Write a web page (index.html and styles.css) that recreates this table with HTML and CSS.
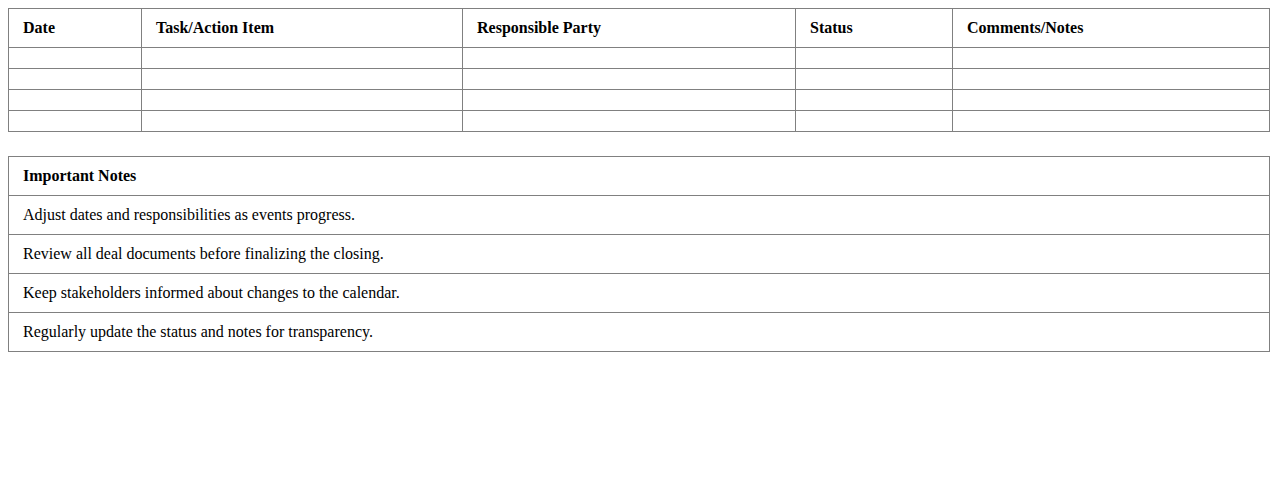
FILE: index.html
```html
<!DOCTYPE html>
<html>
<head>
<meta charset="utf-8">
<link rel="stylesheet" href="styles.css">
</head>
<body>
<table class="grid schedule">
  <colgroup>
    <col class="c-date"><col class="c-task"><col class="c-party"><col class="c-status"><col class="c-notes">
  </colgroup>
  <thead>
    <tr><th>Date</th><th>Task/Action Item</th><th>Responsible Party</th><th>Status</th><th>Comments/Notes</th></tr>
  </thead>
  <tbody>
    <tr><td></td><td></td><td></td><td></td><td></td></tr>
    <tr><td></td><td></td><td></td><td></td><td></td></tr>
    <tr><td></td><td></td><td></td><td></td><td></td></tr>
    <tr><td></td><td></td><td></td><td></td><td></td></tr>
  </tbody>
</table>
<table class="grid notes">
  <thead><tr><th>Important Notes</th></tr></thead>
  <tbody>
    <tr><td>Adjust dates and responsibilities as events progress.</td></tr>
    <tr><td>Review all deal documents before finalizing the closing.</td></tr>
    <tr><td>Keep stakeholders informed about changes to the calendar.</td></tr>
    <tr><td>Regularly update the status and notes for transparency.</td></tr>
  </tbody>
</table>
</body>
</html>
```
FILE: styles.css
```css
html, body { background: #fff; }
body {
  margin: 8px;
  font-family: "Liberation Serif", "Times New Roman", serif;
  font-size: 16px;
  color: #000;
}
.grid {
  width: 100%;
  border-collapse: collapse;
  table-layout: fixed;
}
.grid th, .grid td {
  border: 1px solid #808080;
  padding: 10px 14px;
  text-align: left;
  line-height: 18px;
}
.grid th { font-weight: bold; }
.schedule { margin-bottom: 24px; }
.schedule td { line-height: 0; }
.c-date { width: 133px; }
.c-task { width: 321px; }
.c-party { width: 333px; }
.c-status { width: 157px; }
.c-notes { width: auto; }
```
